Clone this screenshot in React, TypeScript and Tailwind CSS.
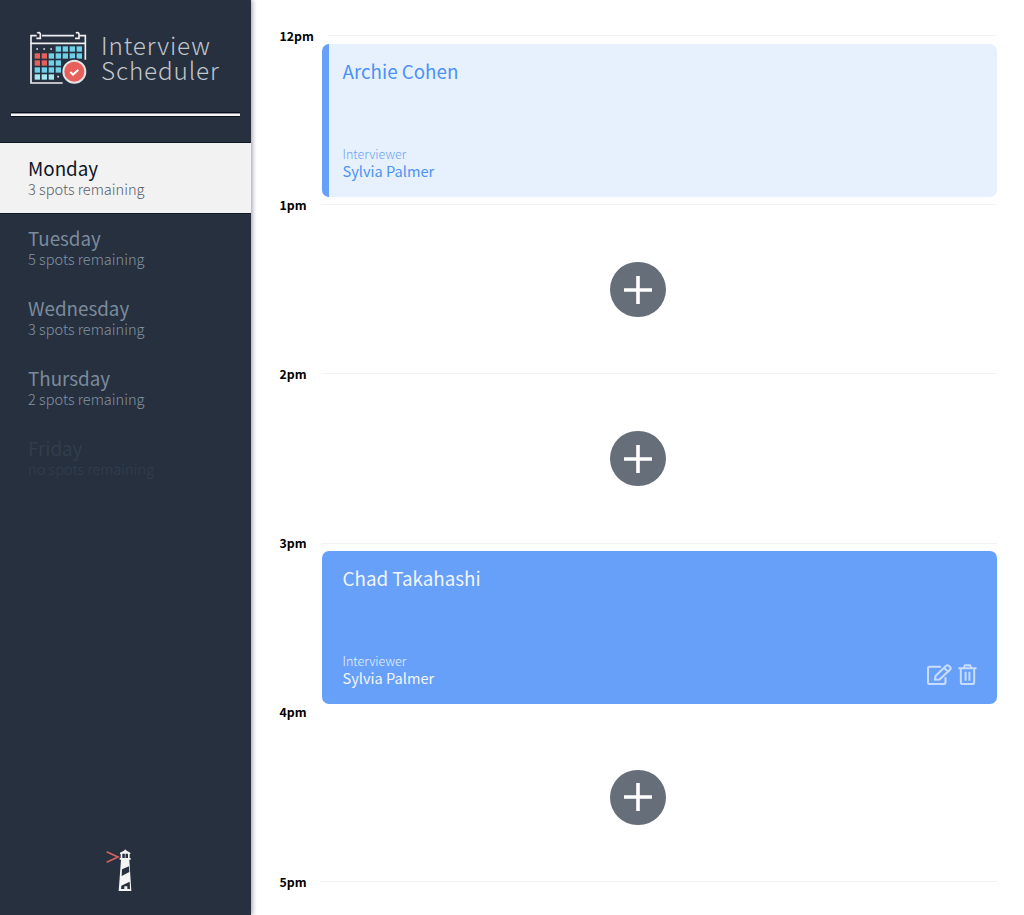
import React from "react";

type Day = { name: string; spots: string; state: "selected" | "open" | "full" };

const days: Day[] = [
  { name: "Monday", spots: "3 spots remaining", state: "selected" },
  { name: "Tuesday", spots: "5 spots remaining", state: "open" },
  { name: "Wednesday", spots: "3 spots remaining", state: "open" },
  { name: "Thursday", spots: "2 spots remaining", state: "open" },
  { name: "Friday", spots: "no spots remaining", state: "full" },
];

const dayStyles = {
  selected: "bg-[#f2f2f2] text-[#0d1526] shadow-[0_1px_0_#111926,0_-1px_0_#111926]",
  open: "text-[#7c8b9c]",
  full: "text-[#323d4c]",
};

const spotStyles = {
  selected: "text-[#565c67]",
  open: "text-[#8493a4]",
  full: "text-[#343f4e]",
};

const cells: [number, number, string][] = [
  [107, 79, "#6fd0ea"], [128, 79, "#6fd0ea"], [149, 79, "#6fd0ea"], [170, 79, "#6fd0ea"],
  [44, 100, "#e8605c"], [65, 100, "#e8605c"], [86, 100, "#6fd0ea"], [107, 100, "#6fd0ea"],
  [128, 100, "#6fd0ea"], [149, 100, "#6fd0ea"], [170, 100, "#6fd0ea"],
  [44, 121, "#e8605c"], [65, 121, "#e8605c"], [86, 121, "#6fd0ea"], [107, 121, "#6fd0ea"],
  [44, 142, "#6fd0ea"], [65, 142, "#6fd0ea"], [86, 142, "#6fd0ea"], [107, 142, "#6fd0ea"],
  [44, 163, "#a5e8f2"], [65, 163, "#a5e8f2"], [86, 163, "#a5e8f2"],
];

function CalendarLogo() {
  return (
    <svg className="h-[55px] w-[58px] shrink-0" viewBox="27 30 174 165" fill="none">
      <path d="M50 47H33V189H128M178 47H196V119M66 47H162" stroke="#eeedf0" strokeWidth="5" />
      <path d="M32 70H197" stroke="#eeedf0" strokeWidth="5" />
      <path d="M49 55h12V42a5 5 0 0 0-9-2M165 55h12V42a5 5 0 0 0-9-2" stroke="#eeedf0" strokeWidth="5" />
      {cells.map(([x, y, color]) => (
        <rect key={`${x}-${y}`} x={x} y={y} width="16" height="16" fill={color} />
      ))}
      <path d="M49 87h5M70 87h5M91 87h5M112 170h5" stroke="#eeedf0" strokeWidth="5" />
      <circle cx="163" cy="155" r="40" fill="#26303f" />
      <circle cx="163" cy="155" r="33" fill="#e8605c" stroke="#e3e3e6" strokeWidth="6" />
      <path d="M151 156l8 8 16-15" stroke="#fff" strokeWidth="6" />
    </svg>
  );
}

function Lighthouse() {
  return (
    <svg className="h-[43px] w-[27px]" viewBox="0 0 81 129" fill="none">
      <path d="M2 8L36 24 2 40" stroke="#d9605f" strokeWidth="5" />
      <path d="M58 1l4 4 11 6v4h-2v12h3v5h-4l6 94H38l7-94h-4v-5h3V15h-2v-4l12-6z" fill="#f4f4f4" />
      <path d="M49 14h7.500v13H49zM58.500 14H66v13h-7.500zM48 61l21-9 1 17-23 12zM45 120l1-10 25-12 1 22h-8v-8h-9v8z" fill="#26303f" />
    </svg>
  );
}

function Hour({ label, line = true, children }: { label: string; line?: boolean; children?: React.ReactNode }) {
  return (
    <section className="h-[169.2px] shrink-0">
      <div className="flex h-[16.2px] items-center gap-[14px]">
        <h4 className="text-[12.3px] leading-4 font-bold text-black">{label}</h4>
        {line && <div className="h-px flex-1 bg-[#f2f2f2]" />}
      </div>
      {children}
    </section>
  );
}

function Empty() {
  return (
    <div className="flex h-[153.5px] items-center justify-center">
      <button className="flex size-[55.2px] items-center justify-center rounded-full bg-[#666e79]" aria-label="Add">
        <svg className="size-7" viewBox="0 0 28 28" stroke="#fff" strokeWidth="3.6">
          <path d="M0 14h28M14 0v28" />
        </svg>
      </button>
    </div>
  );
}

function Appointment({ student, active = false }: { student: string; active?: boolean }) {
  return (
    <article
      className={`ml-[42px] flex h-[153px] flex-col justify-between rounded-[7px] pt-[14px] pr-[20px] pb-[17px] ${
        active ? "bg-[#66a0f9] pl-[21px] text-[#f2f5fb]" : "border-l-[7px] border-[#66a0f9] bg-[#e7f1fe] pl-[14px] text-[#4d91f7]"
      }`}
    >
      <h2 className="text-[18.8px] leading-[26px]">{student}</h2>
      <div className="flex items-end justify-between">
        <div>
          <h4 className={`text-[12.5px] leading-4 font-light ${active ? "text-[#e9f1fd]" : "text-[#6ba1f5]"}`}>Interviewer</h4>
          <h3 className="text-[14.6px] leading-[18px]">Sylvia Palmer</h3>
        </div>
        {active && (
          <div className="mb-[2px] flex gap-[6px]">
            <svg className="h-[21px] w-[25px]" viewBox="0 0 25 22" preserveAspectRatio="none" fill="none" stroke="#c9dcfb" strokeWidth="2.1" strokeLinejoin="round">
              <path d="M14 3H2.500Q1 3 1 4.500V19.500Q1 21 2.500 21H17Q18.500 21 18.500 19.500V14" />
              <path d="M8 16.500L8.500 12.500 19 2Q20.500 .7 22 2L23 3Q24.300 4.500 23 6L12.500 16.300zM17 4l4 4" />
            </svg>
            <svg className="h-[21px] w-[19px]" viewBox="0 0 19 22" fill="none" stroke="#c9dcfb" strokeWidth="2.1">
              <path d="M0 4.500h19M5.500 4L7 1.200h5L13.500 4M2.500 4.500V19.500Q2.500 21 4 21H15Q16.500 21 16.500 19.500V4.500M7.500 8v9.500M11.500 8v9.500" />
            </svg>
          </div>
        )}
      </div>
    </article>
  );
}

export default function App() {
  return (
    <main className="flex h-[915px] w-[1024px] overflow-hidden bg-white font-['Noto_Sans_CJK_SC','Noto_Sans',sans-serif]">
      <aside className="z-10 flex w-[251px] shrink-0 flex-col bg-[#26303f] shadow-[1px_0_5px_rgba(20,25,50,0.45)]">
        <header className="flex h-[112px] gap-[14px] pt-[30px] pl-[29px]">
          <CalendarLogo />
          <h1 className="pt-[2px] text-[24.3px] leading-[25px] font-light tracking-[0.85px] text-[#c4c7cc]">
            Interview
            <br />
            Scheduler
          </h1>
        </header>
        <div className="mx-[11px] h-[5px] shrink-0 border-y border-[#0c121d] bg-[#f5f5f5]">
          <div className="h-px bg-[#8d929a]" />
        </div>
        <nav className="mt-[26px]">
          <ul>
            {days.map((day) => (
              <li key={day.name} className={`h-[70px] pt-[12px] pl-[28px] ${dayStyles[day.state]}`}>
                <h2 className="text-[18.8px] leading-[26px]">{day.name}</h2>
                <h3 className={`-mt-px text-[14.6px] leading-[17px] font-light ${spotStyles[day.state]}`}>{day.spots}</h3>
              </li>
            ))}
          </ul>
        </nav>
        <div className="mt-auto mb-[23px] ml-[106px]">
          <Lighthouse />
        </div>
      </aside>
      <section className="flex flex-1 flex-col pt-[27.5px] pr-[27.500px] pl-[28.500px]">
        <Hour label="12pm">
          <Appointment student="Archie Cohen" />
        </Hour>
        <Hour label="1pm">
          <Empty />
        </Hour>
        <Hour label="2pm">
          <Empty />
        </Hour>
        <Hour label="3pm">
          <Appointment student="Chad Takahashi" active />
        </Hour>
        <Hour label="4pm" line={false}>
          <Empty />
        </Hour>
        <Hour label="5pm" />
      </section>
    </main>
  );
}
